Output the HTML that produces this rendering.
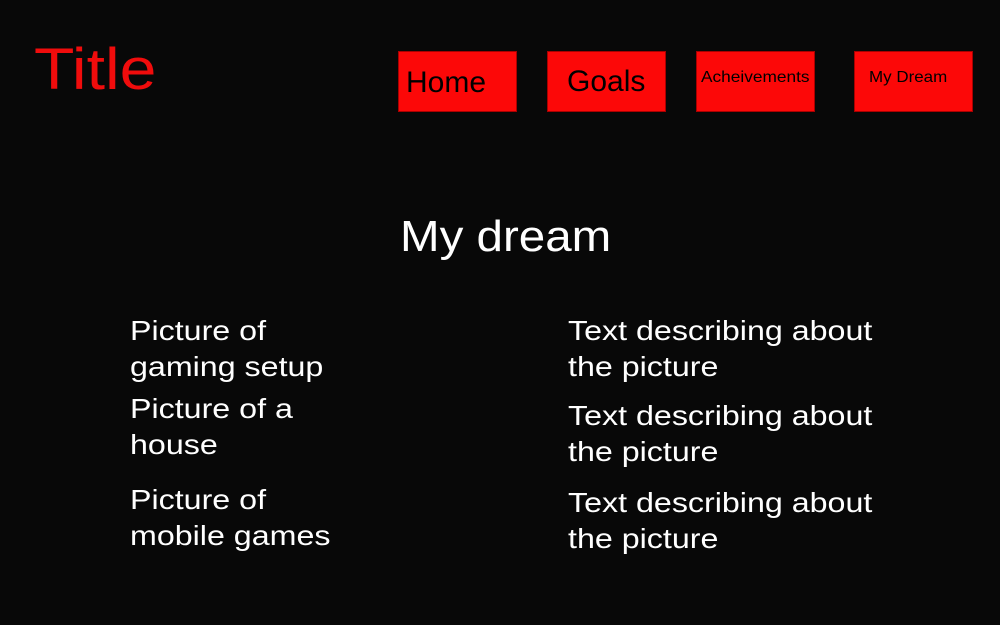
<!DOCTYPE html>
<html><head><style>
body{margin:0;width:1000px;height:625px;background:#080808;font-family:"Liberation Sans",sans-serif;position:relative;overflow:hidden}
.a{position:absolute;white-space:nowrap;transform-origin:0 0}
.b{position:absolute;top:51px;width:119px;height:61px;background:#fc0808;border:1px solid #a00;box-sizing:border-box;color:#000}
.w{color:#fff;font-size:28px;line-height:36px;transform:scaleX(1.15)}
</style></head><body>
<div class="a" style="left:34px;top:36px;font-size:58px;color:#f00c0c;transform:scaleX(1.14)">Title</div>
<div class="b" style="left:398px"><span class="a" style="left:7px;top:14px;font-size:30px">Home</span></div>
<div class="b" style="left:547px"><span class="a" style="left:19px;top:13px;font-size:30px">Goals</span></div>
<div class="b" style="left:696px"><span class="a" style="left:4px;top:17px;font-size:16px;transform:scaleX(1.08)">Acheivements</span></div>
<div class="b" style="left:854px"><span class="a" style="left:14px;top:17px;font-size:16px;transform:scaleX(1.06)">My Dream</span></div>
<div class="a" style="left:400px;top:212px;font-size:44px;color:#fff;transform:scaleX(1.08)">My dream</div>
<div class="a w" style="left:130px;top:313px">Picture of<br>gaming setup</div>
<div class="a w" style="left:130px;top:391px">Picture of a<br>house</div>
<div class="a w" style="left:130px;top:482px">Picture of<br>mobile games</div>
<div class="a w" style="left:568px;top:313px">Text describing about<br>the picture</div>
<div class="a w" style="left:568px;top:398px">Text describing about<br>the picture</div>
<div class="a w" style="left:568px;top:485px">Text describing about<br>the picture</div>
</body></html>
